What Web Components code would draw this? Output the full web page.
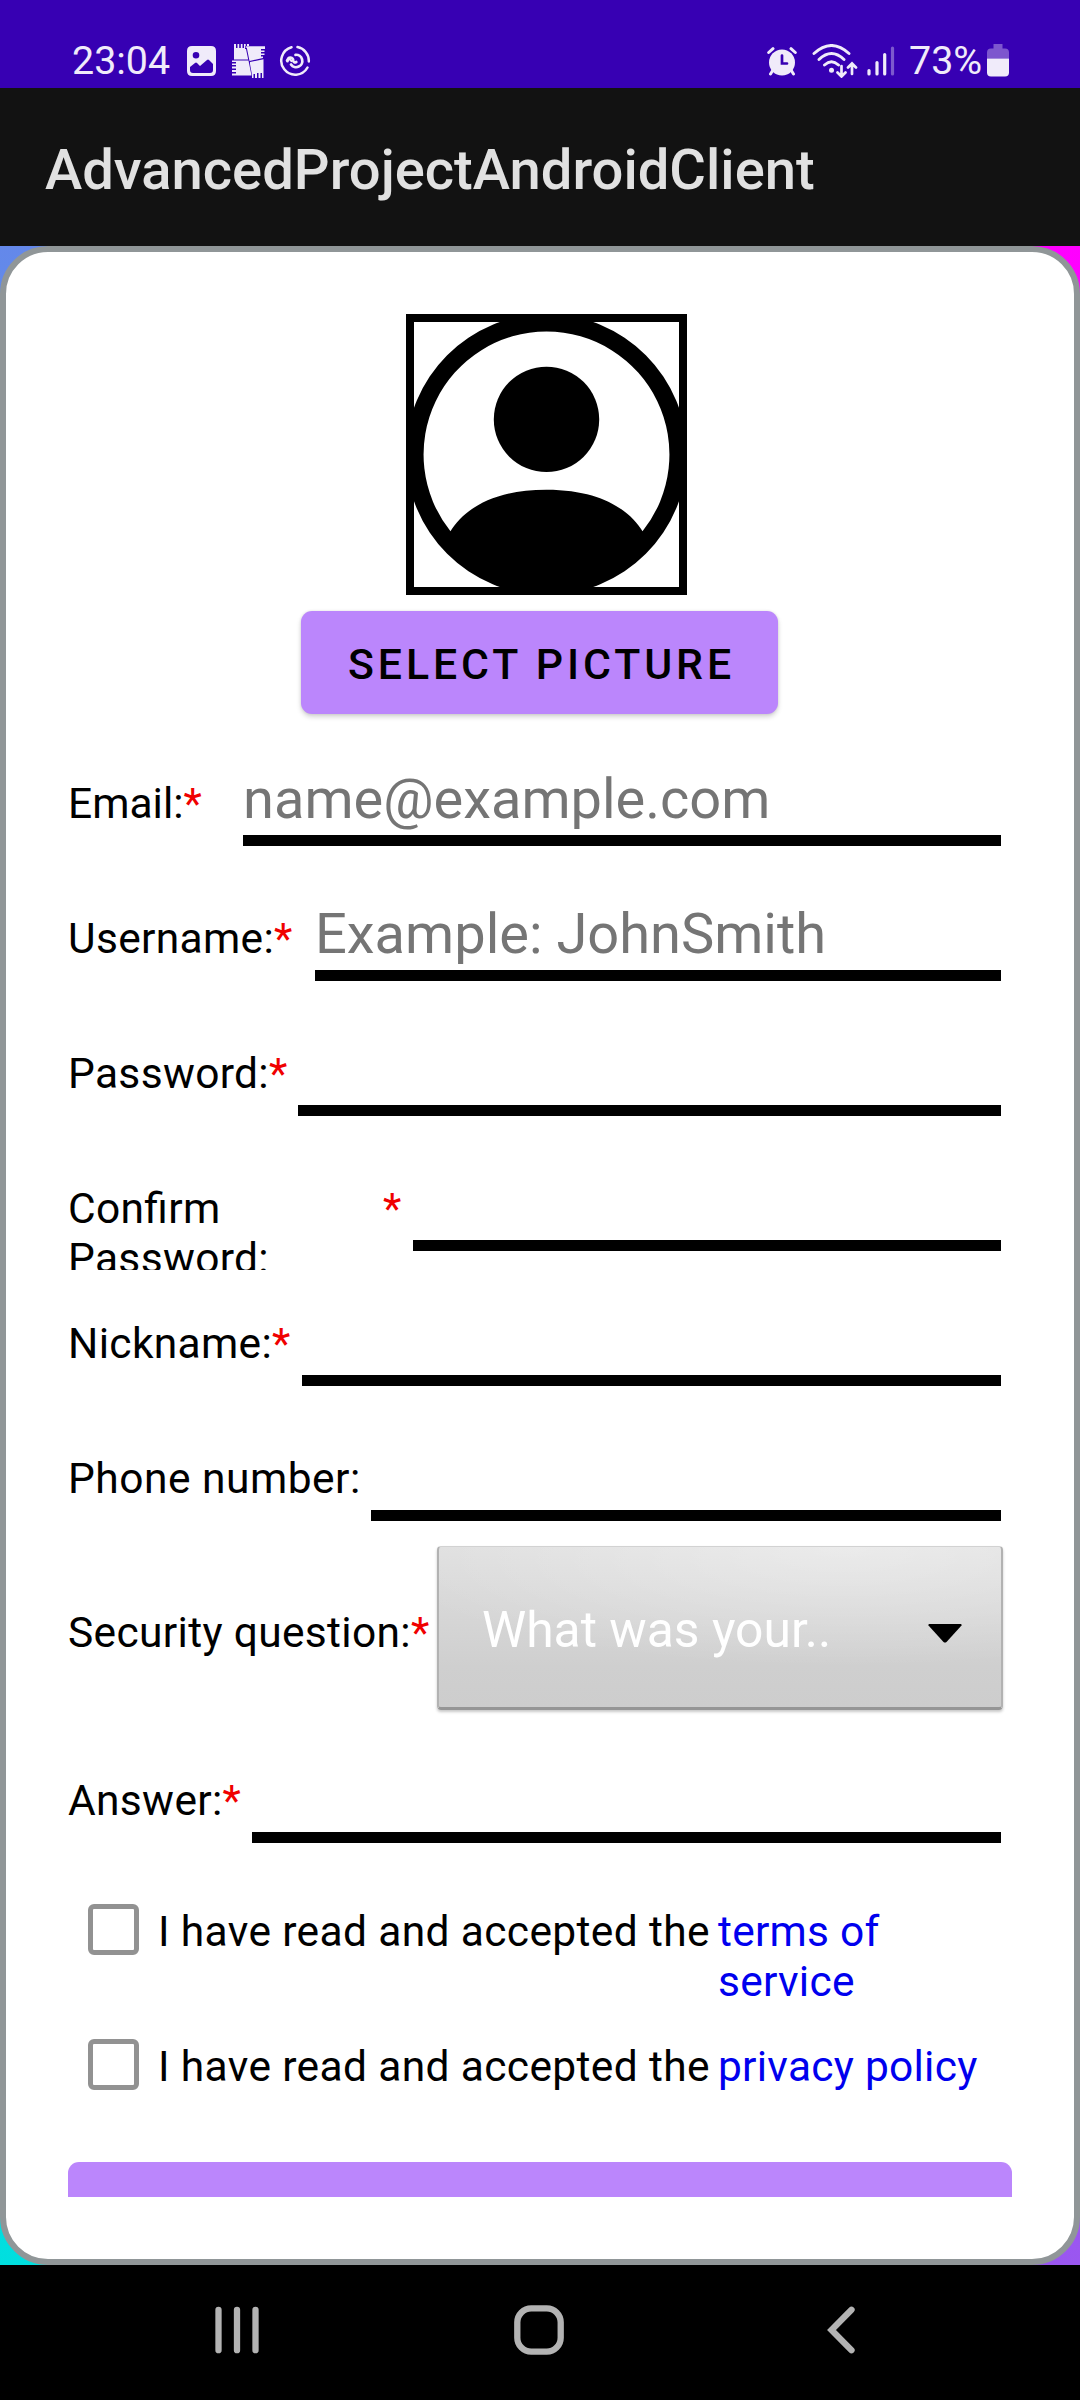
<!DOCTYPE html>
<html lang="en">
<head>
<meta charset="utf-8">
<title>AdvancedProjectAndroidClient</title>
<style>
html, body { margin: 0; padding: 0; background: #000; }
body { font-family: Roboto, "Liberation Sans", sans-serif; width: 1080px; }
</style>
</head>
<body>
<sign-up-screen></sign-up-screen>
<script>
// Registers an element; setup may adjust the cloned content before it is attached.
const define = (name, html, setup) => {
  const template = document.createElement('template');
  template.innerHTML = html;
  customElements.define(name, class extends HTMLElement {
    connectedCallback() {
      if (this.shadowRoot) return;
      const content = template.content.cloneNode(true);
      if (setup) setup(this, content);
      this.attachShadow({ mode: 'open' }).append(content);
    }
  });
};

define('status-bar', `
<style>
:host { display: flex; height: 88px; box-sizing: border-box; padding: 34px 71px 0 72px; background: #3700b3; color: #f0ebfa; font-size: 39.4px; line-height: 54px; }
.group { display: flex; align-items: flex-start; }
.right { margin-left: auto; }
svg { display: block; fill: none; }
.time { width: 115px; }
.pct { width: 78px; }
</style>
<div class="group">
  <span class="time">23:04</span>
  <svg style="margin:12px 16px 0 0" width="29" height="30" viewBox="0 0 29 30"><path fill="#f0ebfa" fill-rule="evenodd" d="M5 0H24Q29 0 29 5V25Q29 30 24 30H5Q0 30 0 25V5Q0 0 5 0ZM3 21V24Q3 27 6 27H23Q26 27 26 24V18L22 14Q21 13 20 14L13 20L10 17Q9 16 8 17ZM9 6A3.3 3.3 0 1 0 9 12.6A3.3 3.3 0 0 0 9 6Z"/></svg>
  <svg style="margin:10px 14px 0 0" width="33" height="34" viewBox="0 0 33 34"><path fill="#f0ebfa" d="M2 0V15.500H16.200L14 5H13V2H17V0H15V4H13.700V0H12V4H10.500V0H8.800V4H7.200V0H5.500V4H4V0ZM14.500 2.200L17.500 17L31 14V12.500H29V11H32.500V9.500H29V8H32.500V6.500H29V5H33V2.200ZM0 16.500H16.500L19.500 31.500H0V29.500H4V28H0V26H4V24.500H0V22.500H4V21H0V19.500H4V18H0ZM18 18L31.500 15.200V34H30V29H28.500V34H26.500V29H25V34H23V30H21.500V34H20V31L18 20Z"/></svg>
  <svg style="margin:11px 0 0" width="32" height="32" viewBox="0 0 32 32" stroke="#f0ebfa" stroke-width="2.500" stroke-linecap="round"><path d="M12.500 2.200A14 14 0 1 0 28.500 22.500M18.500 2.100A14 14 0 0 1 29.800 16.500"/><path stroke-width="2.700" d="M16.500 9.800A6.200 6.200 0 1 1 12 19.500M8.500 16.200Q8.600 12.500 11.500 12.500Q14.300 12.800 14.200 15.800Q14.800 18.300 17.300 17"/><path stroke-width="2.200" d="M7.800 15.500L10 13.500L12.500 16"/></svg>
</div>
<div class="group right">
  <svg style="margin:13px 15px 0 0" width="30" height="29" viewBox="0 0 30 29"><g stroke="#f0ebfa" stroke-linecap="round" stroke-width="3"><path d="M1.700 5.500L6 1.700M28.300 5.500L24 1.700M6 23L3.500 27M24 23L26.500 27"/></g><circle cx="15" cy="15.500" r="13" fill="#f0ebfa"/><path stroke="#3700b3" stroke-width="2.700" stroke-linecap="round" d="M15 8.500V16.500H20"/></svg>
  <svg style="margin:10px 9px 0 0" width="46" height="34" viewBox="0 0 46 34"><g stroke="#f0ebfa" stroke-linecap="round" stroke-width="2.900"><path d="M2 9.500Q19.500 -6.500 37 9.500M7 15.500Q19.500 3.500 32 15.500M12.500 21Q19.500 14.500 26.500 21"/><path stroke-width="2.700" d="M29.500 22V32M25.500 28.500L29.500 32.500L33.500 28.500M40 30V20M36 23.500L40 19.500L44 23.500"/></g><circle cx="19.500" cy="26.200" r="2.500" fill="#f0ebfa"/></svg>
  <svg style="margin:12px 14px 0 0" width="28" height="30" viewBox="0 0 28 30" stroke="#f0ebfa" stroke-linecap="round" stroke-width="3.200"><path d="M2 24.500V28M10 16.500V28M17.700 8.500V28"/><path opacity=".38" d="M25.500 2V28"/></svg>
  <span class="pct">73%</span>
  <svg style="margin:10px 0 0" width="22" height="33" viewBox="0 0 22 33"><path fill="#7d56ce" d="M6.500 0H15.500V4.500H18Q22 4.500 22 8.500V14.500H0V8.500Q0 4.500 4 4.500H6.500Z"/><path fill="#f0ebfa" d="M0 14.500H22V28.500Q22 32.500 18 32.500H4Q0 32.500 0 28.500Z"/></svg>
</div>`);

define('app-bar', `
<style>
:host { display: flex; align-items: center; height: 158px; box-sizing: border-box; padding: 6px 45px 0; background: #121212; color: #e1e1e1; font-size: 56.15px; font-weight: 500; line-height: 66px; }
</style><slot></slot>`);

define('profile-picture', `
<style>
:host { display: block; box-sizing: border-box; width: 281px; height: 281px; border: 8px solid #000; overflow: hidden; }
svg { display: block; margin: -8px; }
</style>
<svg width="281" height="281" viewBox="0 0 16 16"><circle cx="8" cy="6" r="3"/><path fill-rule="evenodd" d="M0 8a8 8 0 1 1 16 0A8 8 0 0 1 0 8zm8-7a7 7 0 0 0-5.468 11.370C3.242 11.226 4.805 10 8 10s4.757 1.225 5.468 2.370A7 7 0 0 0 8 1z"/></svg>`);

define('material-button', `
<style>
:host { display: flex; justify-content: center; align-items: center; box-sizing: border-box; width: 477px; height: 103px; padding: 2px 0 0 4px; border-radius: 11px; background: #bb86fc; color: #000; font-size: 42.8px; font-weight: 500; letter-spacing: 3.900px; box-shadow: 0 3px 5px rgba(0,0,0,.17), 0 0 3px rgba(0,0,0,.1); }
</style><slot></slot>`);

define('field-label', `
<style>
:host { display: flex; align-items: flex-start; font-size: 42.5px; letter-spacing: var(--tracking, .33px); line-height: 50px; color: #000; flex: none; font-feature-settings: "liga" 1; white-space: nowrap; }
.star { color: #f00000; }
.text { display: block; }
</style>
<span class="text"><slot></slot></span><span class="star"></span>`, (host, content) => {
  if (host.hasAttribute('required')) content.querySelector('.star').textContent = '*';
  const width = host.getAttribute('text-width');
  if (width) Object.assign(content.querySelector('.text').style, { width: width + 'px', whiteSpace: 'normal' });
});

define('form-field', `
<style>
:host { display: flex; justify-content: space-between; align-items: flex-start; height: 135px; overflow: hidden; flex: none; }
field-label { padding-top: 49px; }
.line { box-sizing: border-box; height: 116px; border-bottom: 11px solid #000; padding-top: 36px; color: #757575; font-size: 56px; line-height: 66px; white-space: nowrap; flex: none; }
</style>
<field-label><slot></slot></field-label><div class="line"></div>`, (host, content) => {
  const label = content.querySelector('field-label');
  for (const name of ['required', 'text-width']) {
    if (host.hasAttribute(name)) label.setAttribute(name, host.getAttribute(name));
  }
  const line = content.querySelector('.line');
  line.style.width = host.getAttribute('line') + 'px';
  line.textContent = host.getAttribute('hint') || '';
});

define('question-spinner', `
<style>
:host { display: flex; justify-content: space-between; align-items: flex-start; box-sizing: border-box; width: 566px; height: 164px; padding: 69px 39px 0 43px; border-radius: 4px; border: solid; border-width: 1px 2px 3px; border-color: #d2d2d2 #b2b2b2 #969696; background: radial-gradient(ellipse 480px 120px at 72% 0, rgba(255,255,255,.38), rgba(255,255,255,0)), linear-gradient(#dfdfdf, #cfcfcf 75%, #cdcdcd); color: #fff; font-size: 49.8px; line-height: 58px; box-shadow: 0 2px 3px rgba(0,0,0,.22); }
span { margin-top: -15px; }
svg { display: block; margin-top: 8px; }
</style>
<span><slot></slot></span>
<svg width="34" height="19" viewBox="0 0 34 19"><path d="M1 0H33Q34 .5 33.500 1.500L18.500 18Q17 19 15.500 18L.5 1.500Q0 .5 1 0Z"/></svg>`);

define('consent-row', `
<style>
:host { display: flex; align-items: flex-start; height: 135px; box-sizing: border-box; padding: 42px 0 0 20px; font-size: 42.5px; letter-spacing: .36px; line-height: 50px; color: #000; flex: none; white-space: nowrap; }
.box { box-sizing: border-box; width: 51px; height: 51px; border: 5.500px solid #929292; border-radius: 6px; flex: none; }
.text { width: 560px; margin: 3px 0 0 19px; flex: none; }
.link { margin-top: 3px; width: 280px; color: #0000ee; letter-spacing: .25px; white-space: normal; flex: none; }
</style>
<span class="box"></span><span class="text"><slot></slot></span><span class="link"><slot name="link"></slot></span>`);

define('sign-up-card', `
<style>
:host { display: block; height: 2019px; background: linear-gradient(#6488ea, #00dfdf) 0 0 / 50% 100% no-repeat, linear-gradient(#ff00ff, #9a57f0) 100% 0 / 50% 100% no-repeat; }
.card { display: flex; flex-direction: column; box-sizing: border-box; height: 100%; border: 6px solid #909698; border-radius: 48px; background: #fff; padding: 62px 62px 0; }
profile-picture { align-self: center; margin: 0 0 16px 13px; }
material-button { align-self: center; margin: 0 1px 16px 0; flex: none; }
.fields { display: flex; flex-direction: column; width: 933px; }
.email { --tracking: 0; }
.phone { --tracking: .5px; }
.question { display: flex; justify-content: space-between; align-items: flex-start; height: 187px; margin-right: -2px; box-sizing: border-box; padding-top: 6px; }
.question field-label { padding-top: 62px; }
.submit { height: 35px; margin-top: 30px; border-radius: 11px 11px 0 0; background: #bb86fc; flex: none; }
</style>
<div class="card">
  <profile-picture></profile-picture>
  <material-button>SELECT PICTURE</material-button>
  <div class="fields">
    <form-field class="email" required line="758" hint="name@example.com">Email:</form-field>
    <form-field required line="686" hint="Example: JohnSmith">Username:</form-field>
    <form-field required line="703">Password:</form-field>
    <form-field required line="588" text-width="315">Confirm Password:</form-field>
    <form-field required line="699">Nickname:</form-field>
    <form-field class="phone" line="630">Phone number:</form-field>
    <div class="question"><field-label required>Security question:</field-label><question-spinner>What was your..</question-spinner></div>
    <form-field required line="749">Answer:</form-field>
  </div>
  <consent-row>I have read and accepted the<span slot="link">terms of<br>service</span></consent-row>
  <consent-row>I have read and accepted the<span slot="link">privacy policy</span></consent-row>
  <div class="submit"></div>
</div>`);

define('nav-bar', `
<style>
:host { display: flex; height: 135px; box-sizing: border-box; padding: 39px 0 0 214px; background: #000; }
svg { display: block; fill: none; stroke: #b3b3b3; flex: none; }
.home { margin: 0 262px 0 254px; }
</style>
<svg width="46" height="50" viewBox="0 0 46 50" stroke-width="6.300" stroke-linecap="round"><path d="M4.500 5.800V46.200M23 5.800V46.200M41.500 5.800V46.200"/></svg>
<svg class="home" width="50" height="52" viewBox="0 0 50 52" stroke-width="6.300"><rect x="3.300" y="4.300" width="43.400" height="43.400" rx="14"/></svg>
<svg width="30" height="50" viewBox="0 0 30 50" stroke-width="6.300" stroke-linecap="round"><path d="M25.500 5.800L5.500 26L25.500 46.200"/></svg>`);

define('sign-up-screen', `
<style>:host { display: flex; flex-direction: column; width: 1080px; height: 2400px; overflow: hidden; }</style>
<status-bar></status-bar>
<app-bar>AdvancedProjectAndroidClient</app-bar>
<sign-up-card></sign-up-card>
<nav-bar></nav-bar>`);
</script>
</body>
</html>
